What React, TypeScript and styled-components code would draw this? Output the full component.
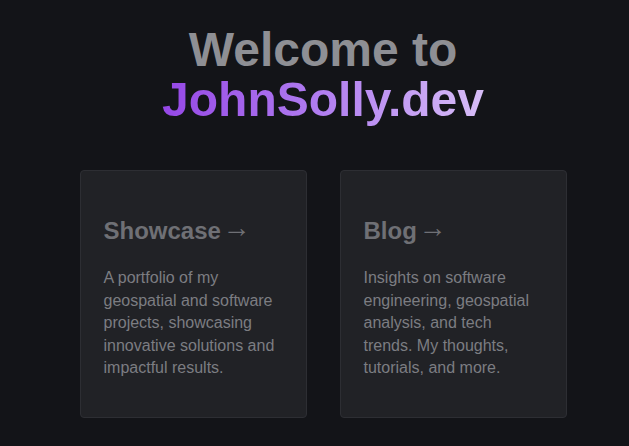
import React from "react";
import styled, { createGlobalStyle } from "styled-components";

const Global = createGlobalStyle`
  html, body { margin: 0; padding: 0; background: #131418; }
  body { font-family: "Liberation Sans", Arial, sans-serif; }
`;

const Page = styled.main`
  min-height: 446px;
  box-sizing: border-box;
  padding: 25px 0 0 17px;
  display: flex;
  flex-direction: column;
  align-items: center;
`;

const Title = styled.h1`
  margin: 0;
  font-size: 48px;
  line-height: 50px;
  font-weight: 700;
  text-align: center;
  color: #8e8f94;
`;

const Gradient = styled.span`
  background: linear-gradient(90deg, #9547e6 0%, #b17ef0 50%, #d7bdf7 100%);
  -webkit-background-clip: text;
  background-clip: text;
  color: transparent;
`;

const Grid = styled.div`
  margin-top: 45px;
  display: grid;
  grid-template-columns: 227px 227px;
  gap: 33px;
`;

const Card = styled.a`
  display: block;
  box-sizing: border-box;
  height: 248px;
  padding: 44px 23px 0 23px;
  background: #212226;
  border: 1px solid #2d2e33;
  border-radius: 4px;
  text-decoration: none;
`;

const CardTitle = styled.h2`
  margin: 0 0 20px;
  font-size: 24px;
  line-height: 32px;
  font-weight: 700;
  color: #6f7075;
`;

const Arrow = styled.span`
  font-family: "Liberation Sans", Arial, sans-serif;
  font-weight: 400;
  font-size: 28px;
  line-height: 0;
  vertical-align: 2px;
  margin-left: -5px;
`;

const CardText = styled.p`
  margin: 0;
  font-size: 16px;
  line-height: 22.5px;
  color: #7c7d82;
`;

const cards = [
  {
    title: "Showcase",
    text: "A portfolio of my geospatial and software projects, showcasing innovative solutions and impactful results.",
  },
  {
    title: "Blog",
    text: "Insights on software engineering, geospatial analysis, and tech trends. My thoughts, tutorials, and more.",
  },
];

export default function App() {
  return (
    <>
      <Global />
      <Page>
        <Title>
          Welcome to
          <br />
          <Gradient>JohnSolly.dev</Gradient>
        </Title>
        <Grid>
          {cards.map((c) => (
            <Card key={c.title} href="#">
              <CardTitle>
                {c.title} <Arrow>→</Arrow>
              </CardTitle>
              <CardText>{c.text}</CardText>
            </Card>
          ))}
        </Grid>
      </Page>
    </>
  );
}
